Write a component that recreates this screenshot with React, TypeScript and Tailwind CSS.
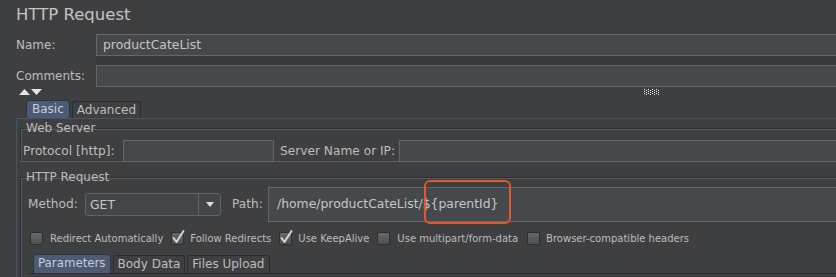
import React from "react";

const font = { fontFamily: '"DejaVu Sans", "Liberation Sans", sans-serif' };

function Field({ className = "" }: { className?: string }) {
  return (
    <div
      className={
        "bg-[#46494b] border border-[#646668] " + className
      }
    />
  );
}

function Check({ checked }: { checked?: boolean }) {
  return (
    <div className="relative w-[13px] h-[13px] shrink-0">
      <div className="absolute inset-0 rounded-[2px] border border-[#2c2e30] bg-gradient-to-b from-[#66686a] to-[#4d4f51]" />
      {checked && (
        <svg
          className="absolute left-[0px] top-[-3px]"
          width="15"
          height="16"
          viewBox="0 0 15 16"
        >
          <path
            d="M2.5 9 L5.5 13 L12.5 2"
            fill="none"
            stroke="#d6d6d6"
            strokeWidth="2"
            strokeLinecap="round"
            strokeLinejoin="round"
          />
        </svg>
      )}
    </div>
  );
}

function CheckItem({ label, checked, gap }: { label: string; checked?: boolean; gap: string }) {
  return (
    <div className={"flex items-center " + gap}>
      <Check checked={checked} />
      <span className="text-[10px] leading-none whitespace-nowrap">{label}</span>
    </div>
  );
}

export default function App() {
  return (
    <div
      className="w-[836px] h-[277px] overflow-hidden bg-[#3d3f41] text-[#bdbdbd]"
      style={font}
    >
      <div className="w-[900px] pl-4">
        {/* title */}
        <div className="h-[34px] pt-[4px] text-[16.5px] leading-[22px] text-[#c3c3c3]">
          HTTP Request
        </div>
        {/* name */}
        <div className="flex items-center h-[22px]">
          <span className="w-[80px] text-[12px]">Name:</span>
          <div className="flex-1 h-[22px] bg-[#46494b] border border-[#646668] flex items-center pl-[6px] text-[12.4px] text-[#c6c6c6]">
            productCateList
          </div>
        </div>
        <div className="h-[9px] bg-[#38393b] ml-[80px]" />
        {/* comments */}
        <div className="flex items-center h-[22px]">
          <span className="w-[80px] text-[12px]">Comments:</span>
          <Field className="flex-1 h-[22px]" />
        </div>
        {/* arrows + grip */}
        <div className="relative h-[13px]">
          <svg className="absolute left-[3px] top-[2px]" width="24" height="7" viewBox="0 0 24 7">
            <path d="M0 6 L5.5 0 L11 6 Z" fill="#e6e6e6" />
            <path d="M12 0 L23 0 L17.5 6 Z" fill="#e6e6e6" />
          </svg>
          <svg className="absolute left-[628px] top-[2px]" width="16" height="6" viewBox="0 0 16 6">
            {[0, 1, 2, 3, 4, 5, 6, 7].map((i) => (
              <g key={i}>
                <rect x={i * 2} y={i % 2 === 0 ? 0 : 1} width="1" height="1" fill="#f0f0f0" />
                <rect x={i * 2} y={i % 2 === 0 ? 2 : 3} width="1" height="1" fill="#f0f0f0" />
                <rect x={i * 2} y={i % 2 === 0 ? 4 : 5} width="1" height="1" fill="#f0f0f0" />
              </g>
            ))}
          </svg>
        </div>
        {/* tabs */}
        <div className="flex items-end h-[18px] pl-[10px] gap-[2px]">
          <div className="h-[18px] px-[5px] rounded-t-[3px] bg-[#4c5a74] border border-b-0 border-[#2e3440] text-[12px] leading-[16px] text-[#c8ccd4]">
            Basic
          </div>
          <div className="h-[17px] px-[4px] rounded-t-[3px] border border-b-0 border-[#2a2c2e] text-[12px] leading-[16px]">
            Advanced
          </div>
        </div>
        {/* panel */}
        <div className="border-t border-l border-[#4a5268] h-[200px] pl-[3px] pt-[3px]">
          {/* web server group */}
          <fieldset className="border-t border-l border-[#2b2d2f] shadow-[inset_1px_1px_0_#5a5d60] h-[38px] pl-[2px]">
            <legend className="ml-[2px] px-[1px] text-[12px] leading-[12px]">Web Server</legend>
            <div className="flex items-center h-[22px] mt-[6px]">
              <span className="w-[100px] text-[12.2px] whitespace-nowrap">Protocol [http]:</span>
              <Field className="w-[151px] h-[22px]" />
              <span className="ml-[6px] w-[119px] text-[12.2px] whitespace-nowrap">Server Name or IP:</span>
              <Field className="flex-1 h-[22px]" />
            </div>
          </fieldset>
          <div className="h-[2px] border-t border-[#5a5d60] mt-[1px]" />
          {/* http request group */}
          <fieldset className="mt-[8px] border-t border-l border-[#2b2d2f] shadow-[inset_1px_1px_0_#5a5d60] h-[120px] pl-[7px]">
            <legend className="ml-[-3px] px-[1px] text-[12px] leading-[12px]">HTTP Request</legend>
            <div className="flex items-center h-[35px] mt-[4px]">
              <span className="w-[57px] text-[12.2px]">Method:</span>
              <div className="w-[136px] h-[23px] rounded-[3px] border border-[#616366] bg-[#434648] flex">
                <div className="flex-1 border-r border-[#616366] text-[12.4px] leading-[21px] pl-[4px] text-[#c6c6c6]">
                  GET
                </div>
                <div className="w-[21px] flex items-center justify-center">
                  <svg width="8" height="5" viewBox="0 0 8 5">
                    <path d="M0 0 L8 0 L4 5 Z" fill="#dcdcdc" />
                  </svg>
                </div>
              </div>
              <span className="ml-[11px] w-[36px] text-[12.2px]">Path:</span>
              <div className="relative flex-1 h-[35px] bg-[#46494b] border border-[#646668] flex items-center pl-[8px] text-[12.4px] text-[#c6c6c6]">
                /home/productCateList/${"{parentId}"}
                <div className="absolute left-[155px] top-[-8px] w-[87px] h-[44px] rounded-[6px] border-2 border-[#e2582b]" />
              </div>
            </div>
            <div className="flex items-center h-[13px] mt-[10px] pl-[2px]">
              <CheckItem label="Redirect Automatically" gap="gap-[7px]" />
              <div className="ml-[8px]">
                <CheckItem label="Follow Redirects" checked gap="gap-[6px]" />
              </div>
              <div className="ml-[8px]">
                <CheckItem label="Use KeepAlive" checked gap="gap-[6px]" />
              </div>
              <div className="ml-[8px]">
                <CheckItem label="Use multipart/form-data" gap="gap-[7px]" />
              </div>
              <div className="ml-[9px]">
                <CheckItem label="Browser-compatible headers" gap="gap-[6px]" />
              </div>
            </div>
            <div className="flex items-end h-[19px] mt-[9px] pl-[5px] gap-[2px]">
              <div className="h-[19px] px-[4px] rounded-t-[3px] bg-[#4c5a74] border border-b-0 border-[#2e3440] text-[11.8px] leading-[17px] text-[#c8ccd4]">
                Parameters
              </div>
              <div className="h-[18px] px-[4px] rounded-t-[3px] border border-b-0 border-[#2a2c2e] text-[12px] leading-[17px]">
                Body Data
              </div>
              <div className="h-[18px] px-[4px] rounded-t-[3px] border border-b-0 border-[#2a2c2e] text-[12px] leading-[17px]">
                Files Upload
              </div>
            </div>
            <div className="border-t border-[#2a2c2e]" />
          </fieldset>
        </div>
      </div>
    </div>
  );
}
